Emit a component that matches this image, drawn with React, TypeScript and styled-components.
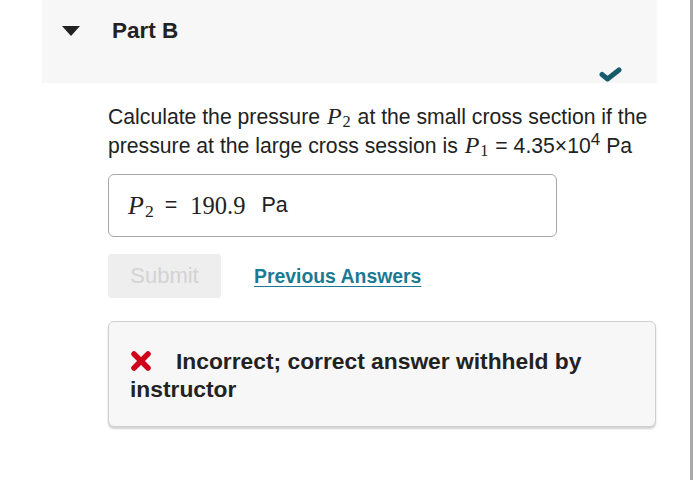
import styled, { createGlobalStyle } from 'styled-components';

const GlobalStyle = createGlobalStyle`
  html, body {
    margin: 0;
    padding: 0;
    background: #ffffff;
  }
  body {
    font-family: 'Liberation Sans', Arial, sans-serif;
    color: #222222;
  }
`;

const Page = styled.div`
  width: 690px;
  height: 480px;
  border-right: 3px solid #a9a9a9;
  background: #ffffff;
  overflow: hidden;
`;

const PartHeader = styled.div`
  margin-left: 42px;
  width: 615px;
  height: 83px;
  background: #f7f7f7;
  display: flex;
  flex-direction: column;
  justify-content: space-between;
  box-sizing: border-box;
  padding: 18px 35px 1px 20px;
`;

const TitleRow = styled.div`
  display: flex;
  align-items: center;
  gap: 32px;
`;

const Caret = styled.span`
  width: 0;
  height: 0;
  border-left: 9px solid transparent;
  border-right: 9px solid transparent;
  border-top: 10px solid #222222;
`;

const Title = styled.h2`
  margin: 0;
  font-size: 22.5px;
  font-weight: bold;
  color: #222222;
  line-height: 26px;
`;

const CheckRow = styled.div`
  display: flex;
  justify-content: flex-end;
`;

const Content = styled.div`
  padding: 19px 0 0 108px;
  width: 549px;
`;

const Question = styled.p`
  margin: 0;
  font-size: 21.2px;
  line-height: 29px;
  color: #222222;
  white-space: nowrap;
`;

const MathVar = styled.span<{ $size?: number }>`
  font-family: 'Liberation Serif', 'Times New Roman', serif;
  font-style: italic;
  font-size: ${({ $size }) => $size ?? 24}px;
  white-space: nowrap;
  padding: 0 1px;

  sub {
    font-style: normal;
    font-size: 0.68em;
    vertical-align: -3px;
    line-height: 0;
    margin-left: 1px;
  }
`;

const Sup = styled.sup`
  font-size: 17px;
  line-height: 0;
  vertical-align: 8px;
`;

const AnswerBox = styled.div`
  margin-top: 14px;
  width: 449px;
  height: 63px;
  box-sizing: border-box;
  border: 1.5px solid #a8a8a8;
  border-radius: 6px;
  display: flex;
  align-items: center;
  padding: 0 18px;
  gap: 10px;
  font-size: 21.5px;
`;

const Serif = styled.span`
  font-family: 'Liberation Serif', 'Times New Roman', serif;
  font-size: 24.5px;
  margin-left: 3px;
`;

const Actions = styled.div`
  margin-top: 17px;
  display: flex;
  align-items: center;
  gap: 33px;
`;

const SubmitButton = styled.button`
  width: 113px;
  height: 44px;
  border: none;
  border-radius: 3px;
  background: #eeeeee;
  color: #d3d3d3;
  font-family: 'Liberation Sans', Arial, sans-serif;
  font-size: 22px;
  padding: 0;
`;

const PrevLink = styled.a`
  font-size: 19.4px;
  font-weight: bold;
  color: #1a7a94;
  text-decoration: underline;
  text-underline-offset: 3px;
`;

const Feedback = styled.div`
  margin-top: 23px;
  width: 548px;
  height: 106px;
  box-sizing: border-box;
  background: #f7f7f7;
  border: 1.5px solid #cfcfcf;
  border-radius: 6px;
  box-shadow: 0 2px 2px rgba(0, 0, 0, 0.18);
  padding: 25px 20px 0 21px;
  font-size: 22.8px;
  font-weight: bold;
  line-height: 28px;
  color: #222222;
`;

const CrossIcon = styled.svg`
  width: 22px;
  height: 22px;
  vertical-align: -3px;
  margin-right: 24px;
`;

export default function App() {
  return (
    <>
      <GlobalStyle />
      <Page>
        <PartHeader>
          <TitleRow>
            <Caret />
            <Title>Part B</Title>
          </TitleRow>
          <CheckRow>
            <svg width="23" height="15" viewBox="0 0 23 15">
              <path
                d="M3 7.5 L8.5 12 L20 3"
                fill="none"
                stroke="#175a6a"
                strokeWidth="5"
                strokeLinecap="round"
                strokeLinejoin="round"
              />
            </svg>
          </CheckRow>
        </PartHeader>
        <Content>
          <Question>
            Calculate the pressure <MathVar>P<sub>2</sub></MathVar> at the small cross section if the
            <br />
            pressure at the large cross session is <MathVar>P<sub>1</sub></MathVar> = 4.35×10
            <Sup>4</Sup> Pa
          </Question>
          <AnswerBox>
            <MathVar $size={26}>P<sub>2</sub></MathVar>
            <span>=</span>
            <Serif>190.9</Serif>
            <span>&nbsp;Pa</span>
          </AnswerBox>
          <Actions>
            <SubmitButton disabled>Submit</SubmitButton>
            <PrevLink href="#">Previous Answers</PrevLink>
          </Actions>
          <Feedback>
            <CrossIcon viewBox="0 0 22 22">
              <path
                d="M4 4 L18 18 M18 4 L4 18"
                stroke="#d0021b"
                strokeWidth="5.5"
                strokeLinecap="round"
              />
            </CrossIcon>
            Incorrect; correct answer withheld by instructor
          </Feedback>
        </Content>
      </Page>
    </>
  );
}
